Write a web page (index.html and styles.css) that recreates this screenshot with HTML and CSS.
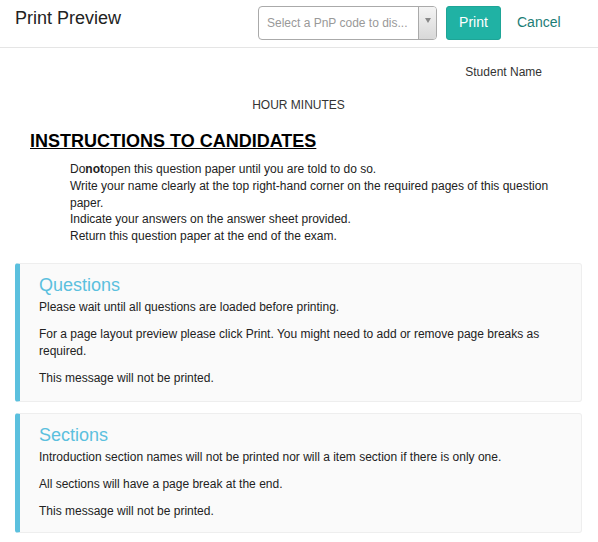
FILE: index.html
```html
<!DOCTYPE html>
<html>
<head>
<meta charset="utf-8">
<link rel="stylesheet" href="styles.css">
</head>
<body>
<header class="topbar">
  <div class="title">Print Preview</div>
  <div class="select">
    <span class="select-text">Select a PnP code to dis...</span>
    <span class="select-arrow"><span class="tri"></span></span>
  </div>
  <button class="btn-print">Print</button>
  <a class="btn-cancel">Cancel</a>
</header>
<main class="page">
  <div class="student">Student Name</div>
  <div class="hours">HOUR MINUTES</div>
  <h2 class="instr-title">INSTRUCTIONS TO CANDIDATES</h2>
  <div class="instr-list">
    <div>Do<b>not</b>open this question paper until you are told to do so.</div>
    <div>Write your name clearly at the top right-hand corner on the required pages of this question paper.</div>
    <div>Indicate your answers on the answer sheet provided.</div>
    <div>Return this question paper at the end of the exam.</div>
  </div>
  <section class="callout callout-q">
    <h4>Questions</h4>
    <p>Please wait until all questions are loaded before printing.</p>
    <p>For a page layout preview please click Print. You might need to add or remove page breaks as required.</p>
    <p>This message will not be printed.</p>
  </section>
  <section class="callout callout-s">
    <h4>Sections</h4>
    <p>Introduction section names will not be printed nor will a item section if there is only one.</p>
    <p>All sections will have a page break at the end.</p>
    <p>This message will not be printed.</p>
  </section>
</main>
</body>
</html>
```

FILE: styles.css
```css
* { box-sizing: border-box; }
body {
  margin: 0;
  font-family: "Liberation Sans", Arial, sans-serif;
  color: #333;
  background: #fff;
}
.topbar {
  display: flex;
  align-items: center;
  height: 48px;
  padding-left: 15px;
  border-bottom: 1px solid #e5e5e5;
}
.title {
  flex: 0 0 243px;
  align-self: flex-start;
  margin-top: 8px;
  font-size: 18px;
  line-height: 20px;
  color: #222;
}
.select {
  display: flex;
  width: 179px;
  height: 34px;
  border: 1px solid #aaa;
  border-radius: 4px;
  overflow: hidden;
  margin-top: -1px;
}
.select-text {
  flex: 1;
  padding-left: 8px;
  font-size: 12px;
  line-height: 32px;
  color: #999;
  white-space: nowrap;
}
.select-arrow {
  width: 18px;
  border-left: 1px solid #aaa;
  background: linear-gradient(#f4f4f4, #d8d8d8);
  display: flex;
  align-items: center;
  justify-content: center;
}
.tri {
  width: 0;
  height: 0;
  border-left: 3px solid transparent;
  border-right: 3px solid transparent;
  border-top: 5px solid #888;
  margin-top: -6px;
}
.btn-print {
  margin-left: 9px;
  width: 55px;
  height: 34px;
  margin-top: -1px;
  border: 1px solid #1ea597;
  border-radius: 3px;
  background: #20b2a4;
  color: #fff;
  font-family: "Liberation Sans", Arial, sans-serif;
  font-size: 14px;
  padding: 0 0 2px;
}
.btn-cancel {
  margin-left: 16px;
  margin-top: -3px;
  font-size: 14px;
  color: #1b7d76;
}
.page {
  padding: 0 16px 0 15px;
}
.student {
  margin-top: 16px;
  text-align: right;
  padding-right: 40px;
  font-size: 12px;
  line-height: 17px;
}
.hours {
  margin-top: 16px;
  text-align: center;
  font-size: 12px;
  line-height: 17px;
}
.instr-title {
  margin: 16px 0 0 15px;
  font-size: 18px;
  line-height: 22px;
  font-weight: bold;
  text-decoration: underline;
  color: #000;
}
.instr-list {
  margin-top: 9px;
  padding-left: 55px;
  padding-right: 10px;
  font-size: 12px;
  line-height: 16.8px;
  color: #222;
}
.callout {
  margin-top: 18px;
  background: #fafafa;
  border: 1px solid #eee;
  border-left: 5px solid #5bc0de;
  border-radius: 3px;
  padding: 11px 20px 12px 19px;
}
.callout-q { padding-bottom: 14px; }
.callout + .callout { margin-top: 11px; }
.callout h4 {
  margin: 0 0 4px;
  font-size: 18px;
  line-height: 20px;
  font-weight: normal;
  color: #5bc0de;
}
.callout p {
  margin: 0 0 10px;
  font-size: 12px;
  line-height: 17px;
  color: #222;
}
.callout p:last-child { margin-bottom: 0; }
```
